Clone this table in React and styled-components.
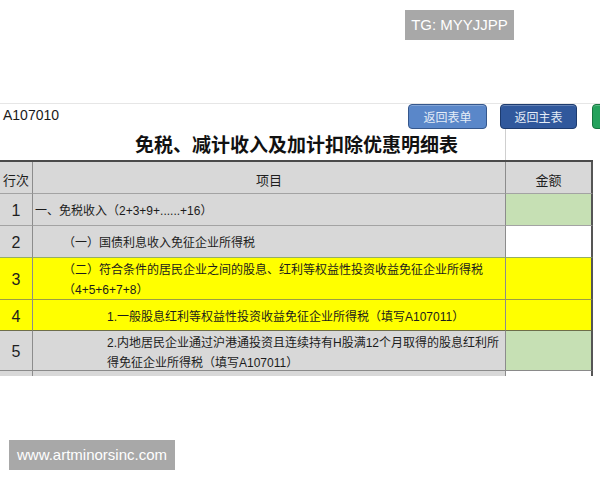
import { Fragment } from "react";
import styled, { createGlobalStyle } from "styled-components";

const GlobalStyle = createGlobalStyle`
  html, body {
    margin: 0;
    padding: 0;
    background: #fff;
  }
  body {
    font-family: "Liberation Sans", "Noto Sans CJK SC", sans-serif;
  }
`;

const colors = {
  gray: "#d8d8d8",
  green: "#c6e0b4",
  yellow: "#ffff00",
  white: "#ffffff",
};

const rows = [
  {
    no: "1",
    lines: ["一、免税收入（2+3+9+......+16）"],
    indent: 2,
    h: 32,
    bg: "gray",
    amt: "green",
    line: "#a3a3a3",
  },
  {
    no: "2",
    lines: ["（一）国债利息收入免征企业所得税"],
    indent: 30,
    h: 32,
    bg: "gray",
    amt: "white",
    line: "#93ad68",
  },
  {
    no: "3",
    lines: [
      "（二）符合条件的居民企业之间的股息、红利等权益性投资收益免征企业所得税",
      "（4+5+6+7+8）",
    ],
    indent: 30,
    h: 42,
    bg: "yellow",
    amt: "yellow",
    line: "#9c9c45",
  },
  {
    no: "4",
    lines: ["1.一般股息红利等权益性投资收益免征企业所得税（填写A107011）"],
    indent: 74,
    h: 31,
    bg: "yellow",
    amt: "yellow",
    line: "#6e6e4a",
  },
  {
    no: "5",
    lines: [
      "2.内地居民企业通过沪港通投资且连续持有H股满12个月取得的股息红利所",
      "得免征企业所得税（填写A107011）",
    ],
    indent: 74,
    h: 40,
    bg: "gray",
    amt: "green",
    line: "#8a8a8a",
  },
];

const Page = styled.div`
  position: relative;
  width: 600px;
  height: 480px;
  overflow: hidden;
  padding-top: 103px;
  box-sizing: border-box;
  background: #fff;
`;

const Badge = styled.div`
  position: absolute;
  top: 10px;
  right: 86px;
  width: 109px;
  height: 30px;
  background: #a8a8a8;
  color: #fff;
  font-size: 15px;
  line-height: 30px;
  text-align: center;
`;

const Watermark = styled.div`
  position: absolute;
  left: 9px;
  top: 440px;
  width: 166px;
  height: 30px;
  background: #a8a8a8;
  color: #fff;
  font-size: 15px;
  line-height: 30px;
  text-align: center;
`;

const Sheet = styled.div`
  border-top: 1px solid #e6e6e6;
`;

const TopArea = styled.div`
  height: 56px;
  display: flex;
  flex-direction: column;
  background: linear-gradient(
    to right,
    transparent 505px,
    #cfcfcf 505px,
    #cfcfcf 506px,
    transparent 506px
  );
`;

const ToolRow = styled.div`
  display: flex;
  align-items: flex-start;
  height: 26px;
  padding-left: 3px;
`;

const Code = styled.div`
  width: 405px;
  flex-shrink: 0;
  font-size: 14px;
  line-height: 16px;
  margin-top: 3px;
  color: #1a1a1a;
`;

const SheetButton = styled.div`
  flex-shrink: 0;
  width: ${(p) => p.$w}px;
  height: 25px;
  margin-right: ${(p) => p.$gap}px;
  box-sizing: border-box;
  border-radius: 4px;
  border: 1px solid ${(p) => p.$border};
  background: ${(p) => p.$bg};
  color: #e4ecf7;
  font-family: "Noto Sans CJK SC", sans-serif;
  font-size: 12px;
  line-height: 23px;
  text-align: center;
  box-shadow: inset 0 1px 0 rgba(255, 255, 255, 0.25);
`;

const Title = styled.div`
  padding-left: 135px;
  margin-top: 2px;
  font-family: "Noto Sans CJK SC", sans-serif;
  font-weight: 700;
  font-size: 19px;
  line-height: 24px;
  color: #111;
`;

const Table = styled.div`
  display: grid;
  grid-template-columns: 33px 473px 87px;
  width: 593px;
  border-top: 2px solid #4a4a4a;
`;

const Cell = styled.div`
  box-sizing: border-box;
  height: ${(p) => p.$h}px;
  background: ${(p) => colors[p.$bg]};
  border-bottom: 1px solid ${(p) => p.$line || "#a3a3a3"};
  border-right: ${(p) => (p.$last ? "2px solid #555" : "1px solid #8c8c8c")};
  color: #222;
  overflow: visible;
`;

const HeadCell = styled(Cell)`
  display: flex;
  align-items: center;
  justify-content: center;
  padding-top: 4px;
  font-family: "Noto Sans CJK SC", sans-serif;
  font-size: 13px;
  color: #1e1e1e;
`;

const NoCell = styled(Cell)`
  display: flex;
  align-items: center;
  justify-content: center;
  padding-top: 3px;
  font-size: 16px;
  color: #1e1e1e;
`;

const ItemCell = styled(Cell)`
  display: flex;
  flex-direction: column;
  justify-content: ${(p) => (p.$multi ? "flex-start" : "center")};
  padding-top: ${(p) => (p.$multi ? 2 : 3)}px;
  padding-left: ${(p) => p.$indent}px;
  font-size: 12px;
  line-height: 20px;
  color: #1c1c1c;
  white-space: nowrap;
`;

const Tail = styled(Cell)`
  border-bottom: none;
`;

export default function App() {
  return (
    <Page>
      <GlobalStyle />
      <Sheet>
        <TopArea>
          <ToolRow>
            <Code>A107010</Code>
            <SheetButton $w={79} $gap={13} $bg="#5a87c9" $border="#35578c">
              返回表单
            </SheetButton>
            <SheetButton $w={77} $gap={15} $bg="#30589c" $border="#1d3b6e">
              返回主表
            </SheetButton>
            <SheetButton $w={60} $gap={0} $bg="#25a25c" $border="#17763f" />
          </ToolRow>
          <Title>免税、减计收入及加计扣除优惠明细表</Title>
        </TopArea>
        <Table>
          <HeadCell $h={32} $bg="gray">
            行次
          </HeadCell>
          <HeadCell $h={32} $bg="gray">
            项目
          </HeadCell>
          <HeadCell $h={32} $bg="gray" $last>
            金额
          </HeadCell>
          {rows.map((r) => (
            <Fragment key={r.no}>
              <NoCell $h={r.h} $bg={r.bg} $line={r.line}>
                {r.no}
              </NoCell>
              <ItemCell
                $h={r.h}
                $bg={r.bg}
                $line={r.line}
                $indent={r.indent}
                $multi={r.lines.length > 1}
              >
                {r.lines.map((t) => (
                  <span key={t}>{t}</span>
                ))}
              </ItemCell>
              <Cell $h={r.h} $bg={r.amt} $line={r.line} $last />
            </Fragment>
          ))}
          <Tail $h={5} $bg="gray" />
          <Tail $h={5} $bg="gray" />
          <Tail $h={5} $bg="white" $last />
        </Table>
      </Sheet>
      <Badge>TG: MYYJJPP</Badge>
      <Watermark>www.artminorsinc.com</Watermark>
    </Page>
  );
}
